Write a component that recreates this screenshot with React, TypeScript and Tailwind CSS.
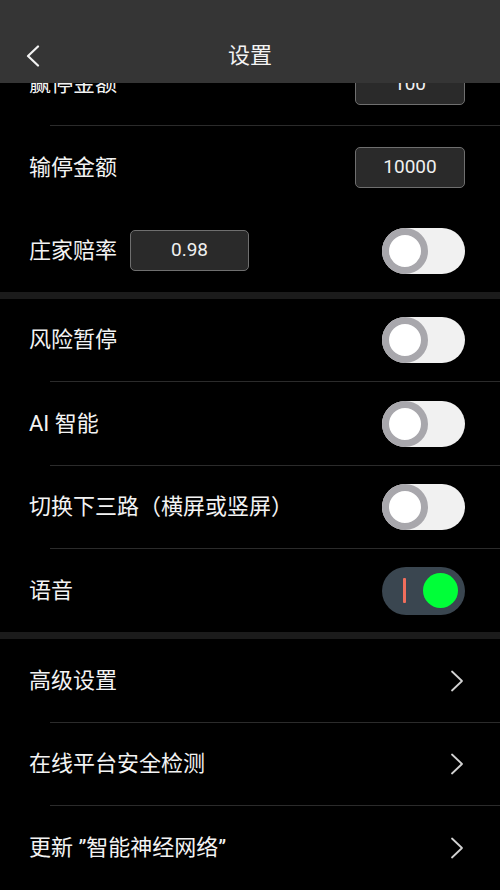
import React from "react";

const font = { fontFamily: 'Roboto, "Noto Sans CJK SC", sans-serif' };

function Toggle({ on }: { on?: boolean }) {
  if (on) {
    return (
      <div className="relative w-[83px] h-[48px] rounded-full bg-[#3a4650] flex items-center">
        <div className="ml-[21px] w-[3px] h-[25px] rounded-[1px] bg-[#f06e5c]" />
        <div className="ml-auto mr-[7px] w-[35px] h-[35px] rounded-full bg-[#00ff38]" />
      </div>
    );
  }
  return (
    <div className="w-[83px] h-[46px] rounded-full bg-[#f1f1f1] flex items-center">
      <div className="w-[46px] h-[46px] rounded-full bg-white border-[7px] border-[#a8a7ac]" />
    </div>
  );
}

function InputBox({ value, w = "w-[110px]" }: { value: string; w?: string }) {
  return (
    <div
      className={`${w} h-[41px] rounded-[5px] border border-[#6f6f6f] bg-[#2a2a2a] flex items-center justify-center text-[19px] text-[#f0f0f0]`}
    >
      {value}
    </div>
  );
}

function Chevron() {
  return (
    <svg width="14" height="22" viewBox="0 0 14 22" fill="none">
      <path d="M2 1.5 L12 11 L2 20.5" stroke="#d2d2d2" strokeWidth="1.8" strokeLinecap="round" strokeLinejoin="round" />
    </svg>
  );
}

function Row({
  h,
  label,
  right,
  mid,
  pr = "pr-[35px]",
}: {
  h: string;
  label: string;
  right?: React.ReactNode;
  mid?: React.ReactNode;
  pr?: string;
}) {
  return (
    <div className={`${h} flex items-center pl-[29px] ${pr}`}>
      <span className="text-[22px] text-[#f3f3f3] leading-none whitespace-nowrap">{label}</span>
      {mid}
      <div className="ml-auto flex items-center">{right}</div>
    </div>
  );
}

const Sep = () => <div className="ml-[50px] h-px bg-[#2b2b2b]" />;
const Divider = () => <div className="h-[7px] bg-[#1b1b1b]" />;

export default function App() {
  return (
    <div className="relative w-[500px] h-[890px] bg-black overflow-hidden" style={font}>
      <div className="pt-[43px]">
        <Row h="h-[82px]" label="赢停金额" right={<InputBox value="100" />} />
        <Sep />
        <Row h="h-[83px]" label="输停金额" right={<InputBox value="10000" />} />
        <Row
          h="h-[83px]"
          label="庄家赔率"
          mid={
            <div className="ml-[13px]">
              <InputBox value="0.98" w="w-[119px]" />
            </div>
          }
          right={<Toggle />}
        />
        <Divider />
        <Row h="h-[82px]" label="风险暂停" right={<Toggle />} />
        <Sep />
        <Row h="h-[83px]" label="AI 智能" right={<Toggle />} />
        <Sep />
        <Row h="h-[82px]" label="切换下三路（横屏或竖屏）" right={<Toggle />} />
        <Sep />
        <Row h="h-[83px]" label="语音" right={<Toggle on />} />
        <Divider />
        <Row h="h-[83px]" label="高级设置" right={<Chevron />} pr="pr-[36px]" />
        <Sep />
        <Row h="h-[82px]" label="在线平台安全检测" right={<Chevron />} pr="pr-[36px]" />
        <Sep />
        <Row h="h-[83px]" label={"更新 \u201d智能神经网络\u201d"} right={<Chevron />} pr="pr-[36px]" />
      </div>

      <div className="absolute top-0 inset-x-0 h-[83px] bg-[#353535] flex flex-col justify-end">
        <div className="relative h-[54px] flex items-center justify-center">
          <svg className="absolute left-[26px] top-[16px]" width="14" height="22" viewBox="0 0 14 22" fill="none">
            <path d="M12 1.5 L2 11 L12 20.5" stroke="#f2f2f2" strokeWidth="2.2" strokeLinecap="round" strokeLinejoin="round" />
          </svg>
          <span className="text-[22px] text-[#f3f3f3] leading-none">设置</span>
        </div>
      </div>
    </div>
  );
}
